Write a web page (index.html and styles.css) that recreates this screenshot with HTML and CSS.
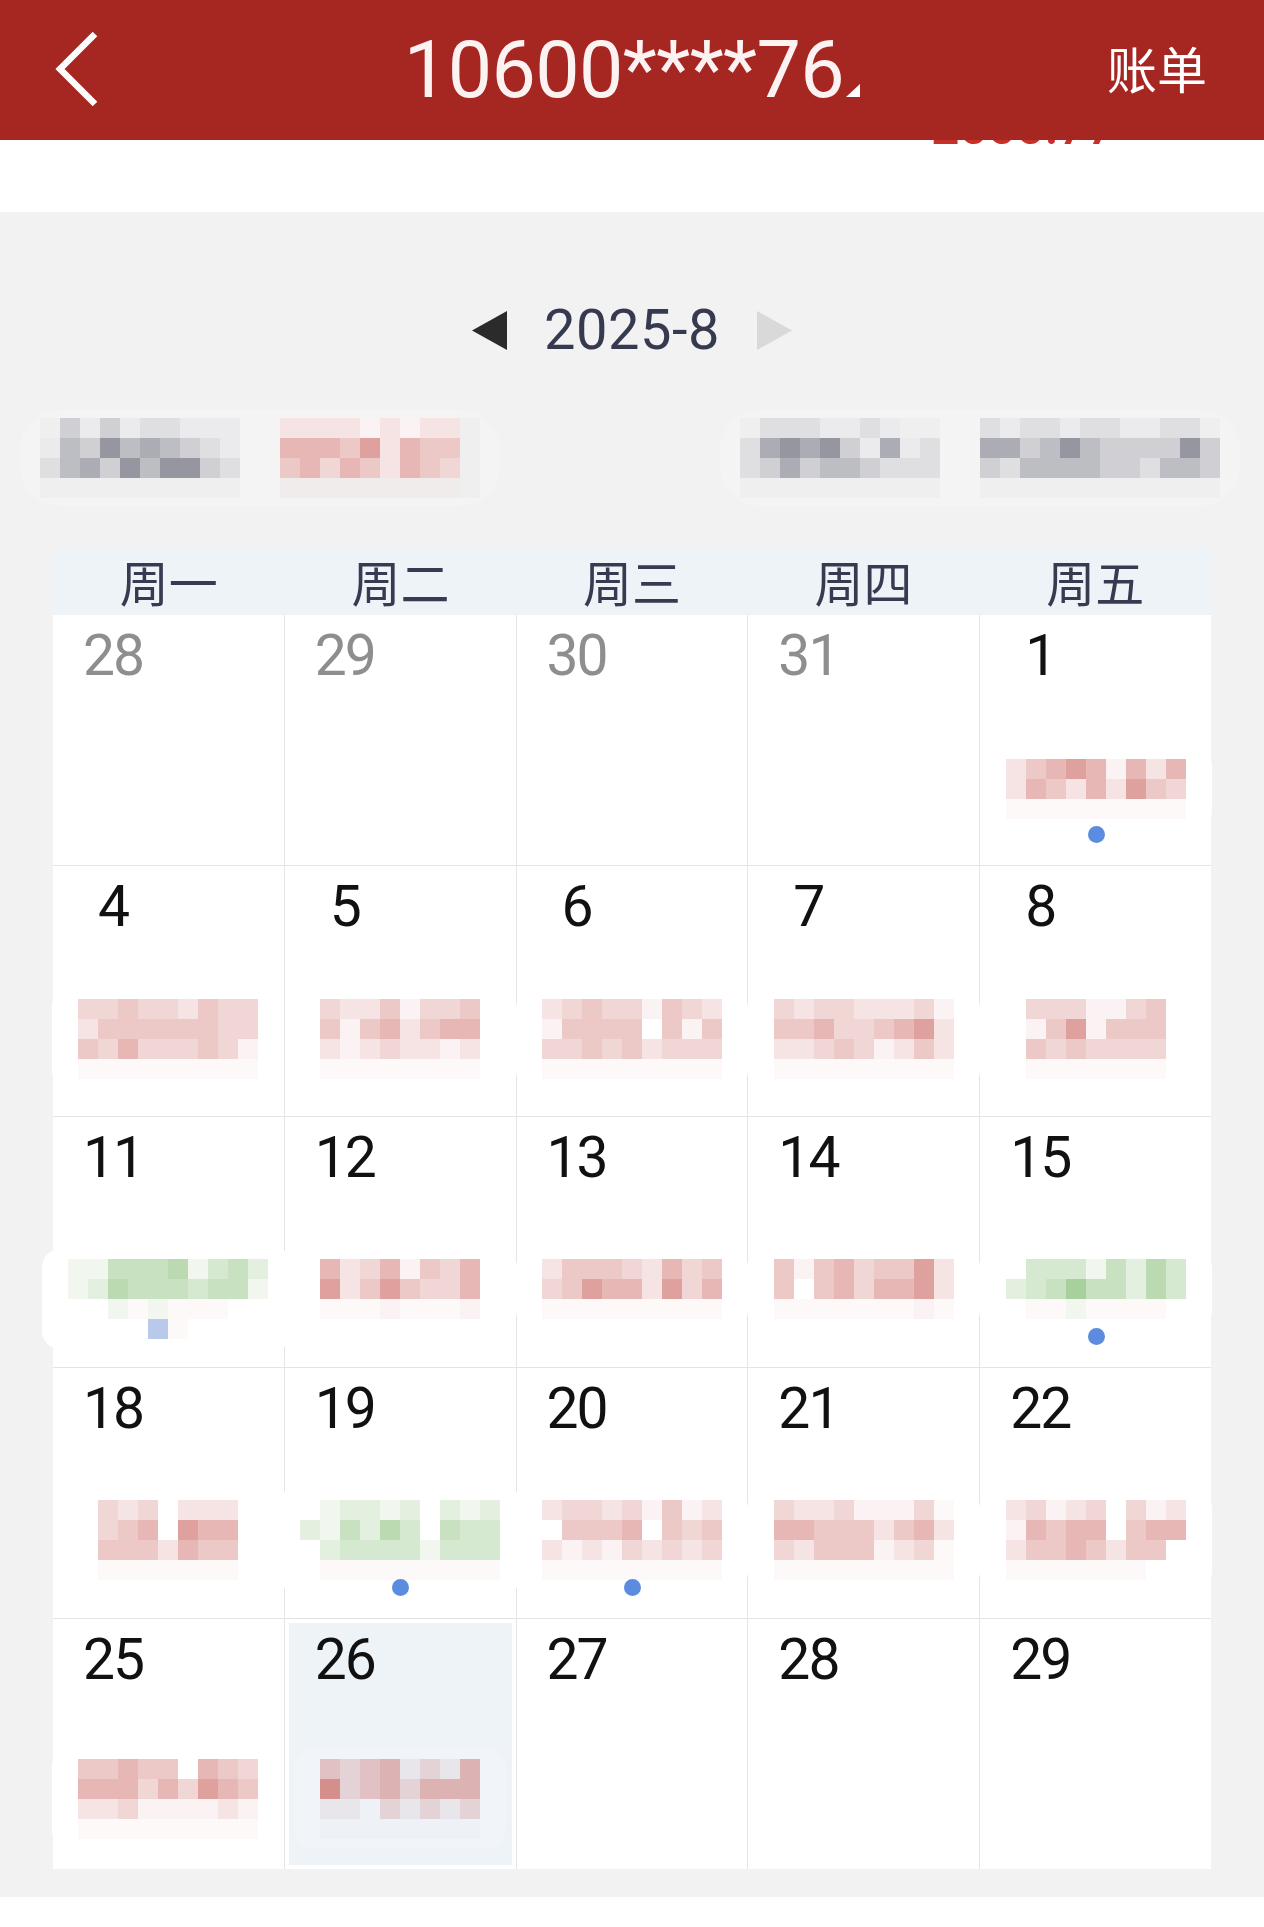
FILE: index.html
```html
<!DOCTYPE html>
<html lang="zh-CN">
<head>
<meta charset="utf-8">
<title>10600****76</title>
<link rel="stylesheet" href="styles.css">
</head>
<body>
<header class="topbar">
  <div class="tb-left">
    <svg class="back" width="48" height="76" viewBox="0 0 48 76"><path d="M40 3 L5 38 L40 73" fill="none" stroke="#fff" stroke-width="6.5" stroke-linejoin="miter"/></svg>
  </div>
  <div class="title">10600****76<svg class="caret" width="14" height="13" viewBox="0 0 14 13"><polygon points="14,0 14,13 0,13" fill="#fff"/></svg></div>
  <div class="tb-right">账单</div>
</header>
<div class="strip"><div class="peek"><span>2000.77</span></div></div>

<div class="nav">
  <svg width="35" height="39" viewBox="0 0 35 39"><polygon points="35,0 35,39 0,19.5" fill="#2b2b2b"/></svg>
  <span class="month">2025-8</span>
  <svg width="35" height="39" viewBox="0 0 35 39"><polygon points="0,0 0,39 35,19.5" fill="#d9d9d9"/></svg>
</div>

<div class="summary">
  <div class="sgrp">
    <div class="mz">
      <div class="mr"><i class="s0"></i><i class="k2"></i><i class="k0"></i><i class="k2"></i><i class="k0"></i><i class="k1"></i><i class="k1"></i><i class="k0"></i><i class="k0"></i><i class="k0"></i></div>
      <div class="mr"><i class="k0"></i><i class="k3"></i><i class="k2"></i><i class="k5"></i><i class="k3"></i><i class="k4"></i><i class="k3"></i><i class="k2"></i><i class="k1"></i><i class="k0"></i></div>
      <div class="mr"><i class="k1"></i><i class="k3"></i><i class="k4"></i><i class="k2"></i><i class="k5"></i><i class="k3"></i><i class="k5"></i><i class="k5"></i><i class="k2"></i><i class="k1"></i></div>
      <div class="mr"><i class="s0"></i><i class="s0"></i><i class="s0"></i><i class="s0"></i><i class="s0"></i><i class="s0"></i><i class="s0"></i><i class="s0"></i><i class="s0"></i><i class="s0"></i></div>
    </div>
    <div class="mz">
      <div class="mr"><i class="r1"></i><i class="r1"></i><i class="r1"></i><i class="r1"></i><i class="r0"></i><i class="r1"></i><i class="r0"></i><i class="r1"></i><i class="r1"></i><i class="s0"></i></div>
      <div class="mr"><i class="r4"></i><i class="r4"></i><i class="r4"></i><i class="r3"></i><i class="r5"></i><i class="r1"></i><i class="r4"></i><i class="r3"></i><i class="r3"></i><i class="s0"></i></div>
      <div class="mr"><i class="r3"></i><i class="r4"></i><i class="r2"></i><i class="r4"></i><i class="r3"></i><i class="r1"></i><i class="r4"></i><i class="r3"></i><i class="r2"></i><i class="s0"></i></div>
      <div class="mr"><i class="s1"></i><i class="s1"></i><i class="s1"></i><i class="s1"></i><i class="s1"></i><i class="s1"></i><i class="s1"></i><i class="s1"></i><i class="s1"></i><i class="s0"></i></div>
    </div>
  </div>
  <div class="sgrp">
    <div class="mz">
      <div class="mr"><i class="s0"></i><i class="k1"></i><i class="k1"></i><i class="k1"></i><i class="k0"></i><i class="k0"></i><i class="k1"></i><i class="k0"></i><i class="s0"></i><i class="s0"></i></div>
      <div class="mr"><i class="k1"></i><i class="k4"></i><i class="k5"></i><i class="k4"></i><i class="k5"></i><i class="k2"></i><i class="k0"></i><i class="k4"></i><i class="k0"></i><i class="k1"></i></div>
      <div class="mr"><i class="k1"></i><i class="k2"></i><i class="k4"></i><i class="k2"></i><i class="k3"></i><i class="k3"></i><i class="k2"></i><i class="k1"></i><i class="k1"></i><i class="k1"></i></div>
      <div class="mr"><i class="s0"></i><i class="s0"></i><i class="s0"></i><i class="s0"></i><i class="s0"></i><i class="s0"></i><i class="s0"></i><i class="s0"></i><i class="s0"></i><i class="s0"></i></div>
    </div>
    <div class="mz">
      <div class="mr"><i class="k1"></i><i class="k0"></i><i class="k1"></i><i class="k1"></i><i class="k0"></i><i class="k1"></i><i class="k1"></i><i class="k0"></i><i class="k0"></i><i class="k1"></i><i class="k1"></i><i class="s0"></i></div>
      <div class="mr"><i class="k4"></i><i class="k4"></i><i class="k2"></i><i class="k3"></i><i class="k5"></i><i class="k3"></i><i class="k2"></i><i class="k2"></i><i class="k2"></i><i class="k2"></i><i class="k5"></i><i class="k2"></i></div>
      <div class="mr"><i class="k2"></i><i class="k1"></i><i class="k3"></i><i class="k3"></i><i class="k3"></i><i class="k3"></i><i class="k2"></i><i class="k2"></i><i class="k1"></i><i class="k3"></i><i class="k3"></i><i class="k2"></i></div>
      <div class="mr"><i class="s0"></i><i class="s0"></i><i class="s0"></i><i class="s0"></i><i class="s0"></i><i class="s0"></i><i class="s0"></i><i class="s0"></i><i class="s0"></i><i class="s0"></i><i class="s0"></i><i class="s0"></i></div>
    </div>
  </div>
</div>

<section class="cal">
  <div class="cal-head">
    <div>周一</div><div>周二</div><div>周三</div><div>周四</div><div>周五</div>
  </div>
  <div class="cal-body">
    <!-- week 1 -->
    <div class="cell wk1"><div class="num other">28</div></div>
    <div class="cell wk1"><div class="num other">29</div></div>
    <div class="cell wk1"><div class="num other">30</div></div>
    <div class="cell wk1"><div class="num other">31</div></div>
    <div class="cell wk1"><div class="num">1</div>
      <div class="mzw"><div class="mz">
        <div class="mr"><i class="r1"></i><i class="r3"></i><i class="r4"></i><i class="r5"></i><i class="r4"></i><i class="r0"></i><i class="r4"></i><i class="r1"></i><i class="r4"></i></div>
        <div class="mr"><i class="r1"></i><i class="r4"></i><i class="r3"></i><i class="r1"></i><i class="r4"></i><i class="r1"></i><i class="r5"></i><i class="r3"></i><i class="r2"></i></div>
        <div class="mr"><i class="f"></i><i class="f"></i><i class="f"></i><i class="f"></i><i class="f"></i><i class="f"></i><i class="f"></i><i class="f"></i><i class="f"></i></div>
      </div></div>
      <span class="dot"></span>
    </div>
    <!-- week 2 -->
    <div class="cell wk2"><div class="num">4</div>
      <div class="mzw"><div class="mz">
        <div class="mr"><i class="r2"></i><i class="r2"></i><i class="r3"></i><i class="r2"></i><i class="r2"></i><i class="r1"></i><i class="r3"></i><i class="r2"></i><i class="r2"></i></div>
        <div class="mr"><i class="r1"></i><i class="r3"></i><i class="r3"></i><i class="r3"></i><i class="r3"></i><i class="r3"></i><i class="r3"></i><i class="r2"></i><i class="r2"></i></div>
        <div class="mr"><i class="r3"></i><i class="r2"></i><i class="r4"></i><i class="r2"></i><i class="r2"></i><i class="r2"></i><i class="r3"></i><i class="r2"></i><i class="r0"></i></div>
        <div class="mr"><i class="f"></i><i class="f"></i><i class="f"></i><i class="f"></i><i class="f"></i><i class="f"></i><i class="f"></i><i class="f"></i><i class="f"></i></div>
      </div></div>
    </div>
    <div class="cell wk2"><div class="num">5</div>
      <div class="mzw"><div class="mz">
        <div class="mr"><i class="r2"></i><i class="r1"></i><i class="r1"></i><i class="r3"></i><i class="r0"></i><i class="r2"></i><i class="r2"></i><i class="r3"></i></div>
        <div class="mr"><i class="r3"></i><i class="r0"></i><i class="r3"></i><i class="r4"></i><i class="r1"></i><i class="r3"></i><i class="r4"></i><i class="r4"></i></div>
        <div class="mr"><i class="r1"></i><i class="r0"></i><i class="r1"></i><i class="r2"></i><i class="r1"></i><i class="r1"></i><i class="r0"></i><i class="r1"></i></div>
        <div class="mr"><i class="f"></i><i class="f"></i><i class="f"></i><i class="f"></i><i class="f"></i><i class="f"></i><i class="f"></i><i class="f"></i></div>
      </div></div>
    </div>
    <div class="cell wk2"><div class="num">6</div>
      <div class="mzw"><div class="mz">
        <div class="mr"><i class="r1"></i><i class="r2"></i><i class="r3"></i><i class="r2"></i><i class="r2"></i><i class="r0"></i><i class="r3"></i><i class="r2"></i><i class="r1"></i></div>
        <div class="mr"><i class="r0"></i><i class="r3"></i><i class="r3"></i><i class="r3"></i><i class="r3"></i><i class="t"></i><i class="r3"></i><i class="r0"></i><i class="r3"></i></div>
        <div class="mr"><i class="r2"></i><i class="r2"></i><i class="r3"></i><i class="r2"></i><i class="r3"></i><i class="r1"></i><i class="r2"></i><i class="r2"></i><i class="r2"></i></div>
        <div class="mr"><i class="f"></i><i class="f"></i><i class="f"></i><i class="f"></i><i class="f"></i><i class="f"></i><i class="f"></i><i class="f"></i><i class="f"></i></div>
      </div></div>
    </div>
    <div class="cell wk2"><div class="num">7</div>
      <div class="mzw"><div class="mz">
        <div class="mr"><i class="r2"></i><i class="r1"></i><i class="r2"></i><i class="r2"></i><i class="r1"></i><i class="r1"></i><i class="r1"></i><i class="r2"></i><i class="r0"></i></div>
        <div class="mr"><i class="r3"></i><i class="r3"></i><i class="r4"></i><i class="r2"></i><i class="r2"></i><i class="r3"></i><i class="r4"></i><i class="r5"></i><i class="r1"></i></div>
        <div class="mr"><i class="r1"></i><i class="r1"></i><i class="r2"></i><i class="r3"></i><i class="r2"></i><i class="r0"></i><i class="r1"></i><i class="r3"></i><i class="r1"></i></div>
        <div class="mr"><i class="f"></i><i class="f"></i><i class="f"></i><i class="f"></i><i class="f"></i><i class="f"></i><i class="f"></i><i class="f"></i><i class="f"></i></div>
      </div></div>
    </div>
    <div class="cell wk2"><div class="num">8</div>
      <div class="mzw"><div class="mz">
        <div class="mr"><i class="r2"></i><i class="r2"></i><i class="r2"></i><i class="r0"></i><i class="r0"></i><i class="r2"></i><i class="r3"></i></div>
        <div class="mr"><i class="r0"></i><i class="r3"></i><i class="r5"></i><i class="r0"></i><i class="r3"></i><i class="r3"></i><i class="r3"></i></div>
        <div class="mr"><i class="r3"></i><i class="r2"></i><i class="r3"></i><i class="r2"></i><i class="r2"></i><i class="r2"></i><i class="r2"></i></div>
        <div class="mr"><i class="f"></i><i class="f"></i><i class="f"></i><i class="f"></i><i class="f"></i><i class="f"></i><i class="f"></i></div>
      </div></div>
    </div>
    <!-- week 3 -->
    <div class="cell wk3"><div class="num">11</div>
      <div class="mzw"><div class="mz">
        <div class="mr"><i class="g0"></i><i class="g0"></i><i class="g3"></i><i class="g3"></i><i class="g3"></i><i class="g4"></i><i class="g0"></i><i class="g2"></i><i class="g3"></i><i class="g1"></i></div>
        <div class="mr"><i class="g0"></i><i class="g1"></i><i class="g4"></i><i class="g3"></i><i class="g3"></i><i class="g3"></i><i class="g2"></i><i class="g3"></i><i class="g3"></i><i class="g0"></i></div>
        <div class="mr"><i class="t"></i><i class="t"></i><i class="g0"></i><i class="f"></i><i class="g0"></i><i class="f"></i><i class="f"></i><i class="f"></i><i class="t"></i><i class="t"></i></div>
        <div class="mr"><i class="t"></i><i class="t"></i><i class="t"></i><i class="t"></i><i class="b"></i><i class="f"></i><i class="t"></i><i class="t"></i><i class="t"></i><i class="t"></i></div>
      </div></div>
    </div>
    <div class="cell wk3"><div class="num">12</div>
      <div class="mzw"><div class="mz">
        <div class="mr"><i class="r4"></i><i class="r1"></i><i class="r2"></i><i class="r4"></i><i class="r0"></i><i class="r3"></i><i class="r2"></i><i class="r4"></i></div>
        <div class="mr"><i class="r5"></i><i class="r1"></i><i class="r3"></i><i class="r5"></i><i class="r3"></i><i class="r2"></i><i class="r2"></i><i class="r4"></i></div>
        <div class="mr"><i class="f"></i><i class="f"></i><i class="f"></i><i class="r0"></i><i class="f"></i><i class="f"></i><i class="f"></i><i class="r0"></i></div>
      </div></div>
    </div>
    <div class="cell wk3"><div class="num">13</div>
      <div class="mzw"><div class="mz">
        <div class="mr"><i class="r1"></i><i class="r3"></i><i class="r3"></i><i class="r3"></i><i class="r2"></i><i class="r1"></i><i class="r4"></i><i class="r2"></i><i class="r3"></i></div>
        <div class="mr"><i class="r2"></i><i class="r3"></i><i class="r5"></i><i class="r4"></i><i class="r4"></i><i class="r1"></i><i class="r5"></i><i class="r2"></i><i class="r4"></i></div>
        <div class="mr"><i class="f"></i><i class="f"></i><i class="f"></i><i class="f"></i><i class="f"></i><i class="f"></i><i class="f"></i><i class="f"></i><i class="f"></i></div>
      </div></div>
    </div>
    <div class="cell wk3"><div class="num">14</div>
      <div class="mzw"><div class="mz">
        <div class="mr"><i class="r3"></i><i class="r0"></i><i class="r3"></i><i class="r4"></i><i class="r2"></i><i class="r3"></i><i class="r3"></i><i class="r5"></i><i class="r1"></i></div>
        <div class="mr"><i class="r3"></i><i class="t"></i><i class="r3"></i><i class="r4"></i><i class="r2"></i><i class="r4"></i><i class="r4"></i><i class="r5"></i><i class="r1"></i></div>
        <div class="mr"><i class="f"></i><i class="f"></i><i class="f"></i><i class="f"></i><i class="f"></i><i class="f"></i><i class="f"></i><i class="r0"></i><i class="f"></i></div>
      </div></div>
    </div>
    <div class="cell wk3"><div class="num">15</div>
      <div class="mzw"><div class="mz">
        <div class="mr"><i class="t"></i><i class="g2"></i><i class="g2"></i><i class="g2"></i><i class="g0"></i><i class="g3"></i><i class="g1"></i><i class="g4"></i><i class="g2"></i></div>
        <div class="mr"><i class="g1"></i><i class="g2"></i><i class="g3"></i><i class="g5"></i><i class="g3"></i><i class="g3"></i><i class="g1"></i><i class="g4"></i><i class="g2"></i></div>
        <div class="mr"><i class="t"></i><i class="f"></i><i class="f"></i><i class="g0"></i><i class="f"></i><i class="f"></i><i class="f"></i><i class="f"></i><i class="t"></i></div>
      </div></div>
      <span class="dot"></span>
    </div>
    <!-- week 4 -->
    <div class="cell wk4"><div class="num">18</div>
      <div class="mzw"><div class="mz">
        <div class="mr"><i class="r2"></i><i class="r1"></i><i class="r2"></i><i class="t"></i><i class="r1"></i><i class="r1"></i><i class="r1"></i></div>
        <div class="mr"><i class="r2"></i><i class="r3"></i><i class="r4"></i><i class="t"></i><i class="r5"></i><i class="r4"></i><i class="r4"></i></div>
        <div class="mr"><i class="r3"></i><i class="r3"></i><i class="r3"></i><i class="r1"></i><i class="r4"></i><i class="r3"></i><i class="r3"></i></div>
        <div class="mr"><i class="f"></i><i class="f"></i><i class="f"></i><i class="f"></i><i class="f"></i><i class="f"></i><i class="f"></i></div>
      </div></div>
    </div>
    <div class="cell wk4"><div class="num">19</div>
      <div class="mzw"><div class="mz">
        <div class="mr"><i class="t"></i><i class="g0"></i><i class="g1"></i><i class="g1"></i><i class="g0"></i><i class="g1"></i><i class="t"></i><i class="g1"></i><i class="g0"></i><i class="g1"></i></div>
        <div class="mr"><i class="g1"></i><i class="g0"></i><i class="g3"></i><i class="g1"></i><i class="g4"></i><i class="g2"></i><i class="t"></i><i class="g3"></i><i class="g2"></i><i class="g2"></i></div>
        <div class="mr"><i class="t"></i><i class="g1"></i><i class="g2"></i><i class="g2"></i><i class="g2"></i><i class="g2"></i><i class="g0"></i><i class="g2"></i><i class="g2"></i><i class="g2"></i></div>
        <div class="mr"><i class="t"></i><i class="f"></i><i class="f"></i><i class="f"></i><i class="f"></i><i class="f"></i><i class="f"></i><i class="f"></i><i class="f"></i><i class="f"></i></div>
      </div></div>
      <span class="dot"></span>
    </div>
    <div class="cell wk4"><div class="num">20</div>
      <div class="mzw"><div class="mz">
        <div class="mr"><i class="r1"></i><i class="r2"></i><i class="r2"></i><i class="r1"></i><i class="r2"></i><i class="r0"></i><i class="r3"></i><i class="r0"></i><i class="r1"></i></div>
        <div class="mr"><i class="t"></i><i class="r3"></i><i class="r3"></i><i class="r3"></i><i class="r4"></i><i class="t"></i><i class="r3"></i><i class="r2"></i><i class="r3"></i></div>
        <div class="mr"><i class="r1"></i><i class="r0"></i><i class="r1"></i><i class="r0"></i><i class="r2"></i><i class="r1"></i><i class="r2"></i><i class="r1"></i><i class="r2"></i></div>
        <div class="mr"><i class="f"></i><i class="f"></i><i class="f"></i><i class="f"></i><i class="f"></i><i class="f"></i><i class="f"></i><i class="f"></i><i class="f"></i></div>
      </div></div>
      <span class="dot"></span>
    </div>
    <div class="cell wk4"><div class="num">21</div>
      <div class="mzw"><div class="mz">
        <div class="mr"><i class="r2"></i><i class="r1"></i><i class="r1"></i><i class="r2"></i><i class="r0"></i><i class="r0"></i><i class="r0"></i><i class="r2"></i><i class="f"></i></div>
        <div class="mr"><i class="r4"></i><i class="r4"></i><i class="r3"></i><i class="r3"></i><i class="r3"></i><i class="r1"></i><i class="r3"></i><i class="r4"></i><i class="r1"></i></div>
        <div class="mr"><i class="r2"></i><i class="r1"></i><i class="r3"></i><i class="r3"></i><i class="r3"></i><i class="r0"></i><i class="r1"></i><i class="r2"></i><i class="f"></i></div>
        <div class="mr"><i class="f"></i><i class="f"></i><i class="f"></i><i class="f"></i><i class="f"></i><i class="f"></i><i class="f"></i><i class="f"></i><i class="f"></i></div>
      </div></div>
    </div>
    <div class="cell wk4"><div class="num">22</div>
      <div class="mzw"><div class="mz">
        <div class="mr"><i class="r1"></i><i class="r2"></i><i class="r0"></i><i class="r1"></i><i class="r2"></i><i class="t"></i><i class="r2"></i><i class="r0"></i><i class="r1"></i></div>
        <div class="mr"><i class="r0"></i><i class="r4"></i><i class="r3"></i><i class="r4"></i><i class="r4"></i><i class="t"></i><i class="r3"></i><i class="r4"></i><i class="r4"></i></div>
        <div class="mr"><i class="r1"></i><i class="r3"></i><i class="r3"></i><i class="r4"></i><i class="r3"></i><i class="r1"></i><i class="r3"></i><i class="r3"></i><i class="t"></i></div>
        <div class="mr"><i class="f"></i><i class="f"></i><i class="f"></i><i class="f"></i><i class="f"></i><i class="f"></i><i class="f"></i><i class="t"></i><i class="t"></i></div>
      </div></div>
    </div>
    <!-- week 5 -->
    <div class="cell wk5"><div class="num">25</div>
      <div class="mzw"><div class="mz">
        <div class="mr"><i class="r3"></i><i class="r3"></i><i class="r4"></i><i class="r3"></i><i class="r3"></i><i class="t"></i><i class="r4"></i><i class="r3"></i><i class="r2"></i></div>
        <div class="mr"><i class="r4"></i><i class="r4"></i><i class="r4"></i><i class="r2"></i><i class="r4"></i><i class="r2"></i><i class="r5"></i><i class="r4"></i><i class="r3"></i></div>
        <div class="mr"><i class="r1"></i><i class="r1"></i><i class="r2"></i><i class="r0"></i><i class="r0"></i><i class="r0"></i><i class="r0"></i><i class="r1"></i><i class="r0"></i></div>
        <div class="mr"><i class="f"></i><i class="f"></i><i class="f"></i><i class="f"></i><i class="f"></i><i class="f"></i><i class="f"></i><i class="f"></i><i class="f"></i></div>
      </div></div>
    </div>
    <div class="cell wk5 today"><div class="num">26</div>
      <div class="mzw"><div class="mz">
        <div class="mr"><i class="q3"></i><i class="q2"></i><i class="q3"></i><i class="q4"></i><i class="q1"></i><i class="q2"></i><i class="q1"></i><i class="q4"></i></div>
        <div class="mr"><i class="q5"></i><i class="q2"></i><i class="q3"></i><i class="q4"></i><i class="q2"></i><i class="q4"></i><i class="q4"></i><i class="q4"></i></div>
        <div class="mr"><i class="q1"></i><i class="q1"></i><i class="q0"></i><i class="q2"></i><i class="q1"></i><i class="q2"></i><i class="q1"></i><i class="q2"></i></div>
        <div class="mr"><i class="q0"></i><i class="q0"></i><i class="q0"></i><i class="q0"></i><i class="q0"></i><i class="q0"></i><i class="q0"></i><i class="q0"></i></div>
      </div></div>
    </div>
    <div class="cell wk5"><div class="num">27</div></div>
    <div class="cell wk5"><div class="num">28</div></div>
    <div class="cell wk5"><div class="num">29</div></div>
  </div>
</section>
<div class="bottom"></div>
</body>
</html>
```

FILE: styles.css
```css
* { box-sizing: border-box; }
html, body { margin: 0; padding: 0; }
body {
  width: 1264px;
  background: #f2f2f2;
  font-family: Roboto, "Noto Sans CJK SC", sans-serif;
  color: #111;
}

/* top bar */
.topbar {
  height: 140px;
  background: #a62621;
  display: grid;
  grid-template-columns: 1fr auto 1fr;
  align-items: center;
  color: #fff;
}
.tb-left { padding-left: 55px; display: flex; align-items: center; }
.back { display: block; margin-top: -2px; }
.title {
  font-family: Roboto, sans-serif;
  font-size: 79px;
  line-height: 80px;
  font-weight: 400;
  letter-spacing: -0.6px;
  color: #fdf2f2;
  white-space: nowrap;
}
.caret { vertical-align: baseline; margin-left: 2px; }
.tb-right {
  justify-self: end;
  padding-right: 57px;
  font-family: "Noto Sans CJK SC", sans-serif;
  font-size: 50px;
  line-height: 60px;
  margin-top: -6px;
}

.strip { height: 72px; background: #fff; }
.peek { margin-left: 931px; width: 190px; height: 4px; overflow: hidden; }
.peek span {
  display: block;
  margin-top: -38px;
  font-size: 50px;
  line-height: 50px;
  color: #c8302a;
  font-weight: 500;
}

/* month nav */
.nav {
  margin-top: 88px;
  height: 60px;
  display: flex;
  justify-content: center;
  align-items: center;
  gap: 37px;
}
.nav svg { display: block; }
.month {
  font-size: 56px;
  line-height: 60px;
  color: #353a50;
  letter-spacing: 0.5px;
}

/* summary */
.summary {
  margin-top: 50px;
  display: flex;
  justify-content: space-between;
  padding: 0 24px 0 20px;
}
.sgrp {
  display: flex;
  gap: 40px;
  padding: 8px 20px;
  background: #f4f4f4;
  border-radius: 40px;
}

/* mosaic */
.mz { display: flex; flex-direction: column; }
.mr { display: flex; }
.mr i { display: block; flex: none; width: 20px; height: 20px; }
.k0 { background: #ebebed; }
.k1 { background: #dfdfe2; }
.k2 { background: #cfcfd4; }
.k3 { background: #bdbec4; }
.k4 { background: #abacb4; }
.k5 { background: #95969f; }
.s0 { background: #efefef; }
.s1 { background: #f1ecec; }
.r0 { background: #fbf3f3; }
.r1 { background: #f6e4e4; }
.r2 { background: #f1d6d6; }
.r3 { background: #ecc8c7; }
.r4 { background: #e6b7b5; }
.r5 { background: #dea19e; }
.g0 { background: #f1f7ef; }
.g1 { background: #e3efdf; }
.g2 { background: #d5e9d0; }
.g3 { background: #c8e1c1; }
.g4 { background: #bbdab2; }
.g5 { background: #a7d09d; }
.q0 { background: #eef1f5; }
.q1 { background: #e9e6eb; }
.q2 { background: #e4d3d6; }
.q3 { background: #e1c1c3; }
.q4 { background: #ddb2b3; }
.q5 { background: #d48f8d; }
.f { background: #fdf9f9; }
.t { background: transparent; }
.b { background: #b9c9ec; }

/* calendar */
.cal { margin: 41px 53px 0; }
.cal-head {
  height: 68px;
  background: #eef3f8;
  display: grid;
  grid-template-columns: repeat(5, minmax(0, 1fr));
  align-items: center;
  text-align: center;
  font-family: "Noto Sans CJK SC", sans-serif;
  font-size: 49px;
  line-height: 68px;
  color: #363b51;
}
.cal-body {
  display: grid;
  grid-template-columns: repeat(5, minmax(0, 1fr));
  grid-auto-rows: 250px;
  gap: 1px;
  background: #e4e4e4;
}
.cell {
  position: relative;
  min-width: 0;
  background: #fff;
  display: flex;
  flex-direction: column;
}
.today { background: #eef3f7; box-shadow: inset 0 0 0 4px #fff; }
.num {
  width: 80px;
  margin-left: 20px;
  padding-top: 12px;
  height: 70px;
  text-align: center;
  font-size: 57px;
  line-height: 58px;
  letter-spacing: -2px;
  color: #111;
}
.num.other { color: #8e8e8e; }

.mzw {
  position: relative;
  z-index: 1;
  align-self: center;
  flex: none;
  padding: 10px 26px;
  background: #fff;
  border-radius: 18px;
}
.today .mzw { background: #f1f4f8; }
.wk1 .mzw { margin-top: 64px; }
.wk2 .mzw { margin-top: 53px; }
.wk3 .mzw { margin-top: 62px; }
.wk4 .mzw { margin-top: 52px; }
.wk5 .mzw { margin-top: 60px; }

.dot {
  position: absolute;
  z-index: 2;
  left: 50%;
  top: 211px;
  width: 17px;
  height: 17px;
  margin-left: -8px;
  border-radius: 50%;
  background: #5b8ce0;
}

.bottom { margin-top: 28px; height: 30px; background: #fff; }
```
